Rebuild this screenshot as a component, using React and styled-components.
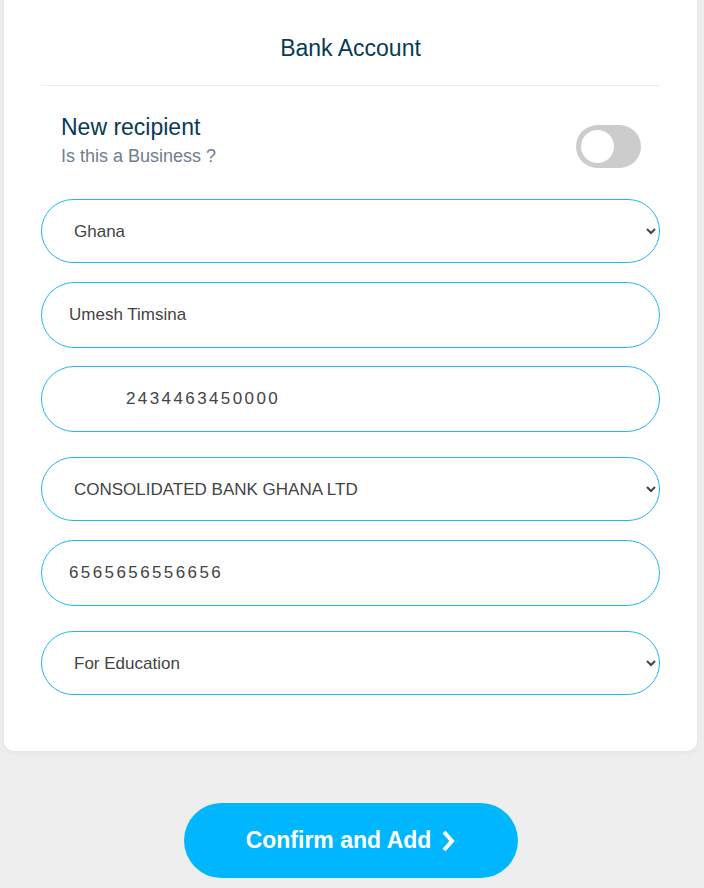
import React from 'react';
import styled, { createGlobalStyle } from 'styled-components';

const GlobalStyle = createGlobalStyle`
  html, body {
    margin: 0;
    padding: 0;
    background: #eeeeee;
    font-family: 'Liberation Sans', Arial, sans-serif;
  }
`;

const Page = styled.div`
  display: flex;
  flex-direction: column;
  width: 693px;
  margin-left: 4px;
  min-height: 888px;
`;

const Card = styled.div`
  box-sizing: border-box;
  background: #ffffff;
  border-radius: 0 0 10px 10px;
  box-shadow: 0 1px 6px rgba(0, 0, 0, 0.06);
  padding: 0 37px 56px;
  display: flex;
  flex-direction: column;
`;

const Title = styled.h2`
  margin: 0;
  height: 86px;
  box-sizing: border-box;
  display: flex;
  align-items: center;
  justify-content: center;
  padding-top: 11px;
  font-size: 23px;
  font-weight: 400;
  color: #063b56;
  border-bottom: 1px solid #ececec;
`;

const RecipientRow = styled.div`
  display: flex;
  align-items: flex-start;
  justify-content: space-between;
  padding: 27px 19px 0 20px;
`;

const RecipientText = styled.div`
  display: flex;
  flex-direction: column;
`;

const RecipientTitle = styled.div`
  font-size: 23px;
  color: #063b56;
  line-height: 28px;
`;

const RecipientSub = styled.div`
  font-size: 18px;
  color: #6f7d90;
  line-height: 22px;
  margin-top: 4px;
`;

const Toggle = styled.div`
  width: 65px;
  height: 43px;
  border-radius: 22px;
  background: #cccccc;
  display: flex;
  align-items: center;
  padding-left: 5px;
  box-sizing: border-box;
  margin-top: 12px;
`;

const Knob = styled.div`
  width: 33px;
  height: 33px;
  border-radius: 50%;
  background: #ffffff;
`;

const Fields = styled.div`
  display: flex;
  flex-direction: column;
  margin-top: 31px;
`;

const fieldBase = `
  width: 100%;
  box-sizing: border-box;
  border: 1px solid #22b8f2;
  border-radius: 33px;
  background: #ffffff;
  color: #444444;
  font-family: 'Liberation Sans', Arial, sans-serif;
  font-size: 17px;
  outline: none;
`;

const Select = styled.select`
  ${fieldBase}
  height: 64px;
  margin-top: ${props => props.$top || 0}px;
  padding: 0 8px 0 28px;
`;

const Input = styled.input`
  ${fieldBase}
  height: 66px;
  margin-top: ${props => props.$top || 0}px;
  padding: 0 20px 0 ${props => props.$indent || 27}px;
  letter-spacing: ${props => (props.$spaced ? '2.4px' : 'normal')};
`;

const ConfirmButton = styled.button`
  align-self: center;
  margin-top: 52px;
  width: 334px;
  height: 75px;
  border: none;
  border-radius: 38px;
  background: #00b7ff;
  color: #ffffff;
  font-family: 'Liberation Sans', Arial, sans-serif;
  font-size: 23px;
  font-weight: 700;
  display: flex;
  align-items: center;
  justify-content: center;
  gap: 10px;
  padding: 0;
`;

const Chevron = () => (
  <svg width="14" height="22" viewBox="0 0 14 22">
    <path d="M3 2 L11 11 L3 20" fill="none" stroke="#ffffff" strokeWidth="4" />
  </svg>
);

export default function App() {
  return (
    <Page>
      <GlobalStyle />
      <Card>
        <Title>Bank Account</Title>
        <RecipientRow>
          <RecipientText>
            <RecipientTitle>New recipient</RecipientTitle>
            <RecipientSub>Is this a Business ?</RecipientSub>
          </RecipientText>
          <Toggle>
            <Knob />
          </Toggle>
        </RecipientRow>
        <Fields>
          <Select defaultValue="Ghana">
            <option>Ghana</option>
          </Select>
          <Input $top={19} defaultValue="Umesh Timsina" />
          <Input $top={18} $indent={84} $spaced defaultValue="2434463450000" />
          <Select $top={25} defaultValue="CONSOLIDATED BANK GHANA LTD">
            <option>CONSOLIDATED BANK GHANA LTD</option>
          </Select>
          <Input $top={19} $spaced defaultValue="6565656556656" />
          <Select $top={25} defaultValue="For Education">
            <option>For Education</option>
          </Select>
        </Fields>
      </Card>
      <ConfirmButton>
        Confirm and Add <Chevron />
      </ConfirmButton>
    </Page>
  );
}
